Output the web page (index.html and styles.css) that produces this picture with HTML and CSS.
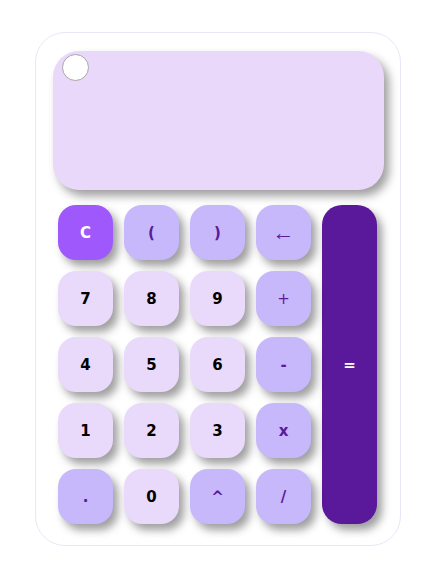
FILE: index.html
```html
<!DOCTYPE html>
<html>
<head>
<meta charset="utf-8">
<link rel="stylesheet" href="styles.css">
</head>
<body>
<div class="calc">
  <div class="display">
    <span class="dot"></span>
  </div>
  <div class="keys">
    <button class="key clear">C</button>
    <button class="key op">(</button>
    <button class="key op">)</button>
    <button class="key op thin arrow">←</button>
    <button class="key equal">=</button>
    <button class="key num">7</button>
    <button class="key num">8</button>
    <button class="key num">9</button>
    <button class="key op thin">+</button>
    <button class="key num">4</button>
    <button class="key num">5</button>
    <button class="key num">6</button>
    <button class="key op">-</button>
    <button class="key num">1</button>
    <button class="key num">2</button>
    <button class="key num">3</button>
    <button class="key op">x</button>
    <button class="key op">.</button>
    <button class="key num">0</button>
    <button class="key op">^</button>
    <button class="key op">/</button>
  </div>
</div>
</body>
</html>
```
FILE: styles.css
```css
html, body {
  margin: 0;
  padding: 0;
  background: #ffffff;
}
body {
  padding: 32px 0 0 35px;
  font-family: "DejaVu Sans", sans-serif;
}
.calc {
  box-sizing: border-box;
  width: 366px;
  height: 514px;
  border: 1px solid #ebe5fa;
  border-radius: 30px;
  padding: 18px 16px 0 17px;
  background: #ffffff;
}
.display {
  position: relative;
  height: 139px;
  border-radius: 26px;
  background: #e9d8fa;
  box-shadow: 5px 6px 10px rgba(0, 0, 0, 0.38);
}
.dot {
  position: absolute;
  left: 9px;
  top: 3px;
  width: 25px;
  height: 25px;
  border-radius: 50%;
  background: #ffffff;
  border: 1px solid #a9a4ad;
}
.keys {
  display: grid;
  grid-template-columns: repeat(5, 55px);
  grid-template-rows: repeat(5, 55px);
  gap: 11px;
  margin: 15px 0 0 5px;
}
.key {
  border: none;
  border-radius: 18px;
  font-family: "DejaVu Sans", sans-serif;
  font-weight: 700;
  font-size: 15px;
  padding: 0;
  box-shadow: 5px 6px 9px rgba(0, 0, 0, 0.38);
  color: #000000;
}
.num {
  background: #e9d9fa;
}
.op {
  background: #c7b7fb;
  color: #5a1a9a;
}
.thin {
  font-weight: 400;
}
.arrow {
  font-size: 22px;
  font-family: "Liberation Sans", sans-serif;
}
.clear {
  background: #9f58fb;
  color: #ffffff;
}
.equal {
  grid-column: 5;
  grid-row: 1 / span 5;
  background: #5a189a;
  color: #ffffff;
  border-radius: 20px;
}
```
